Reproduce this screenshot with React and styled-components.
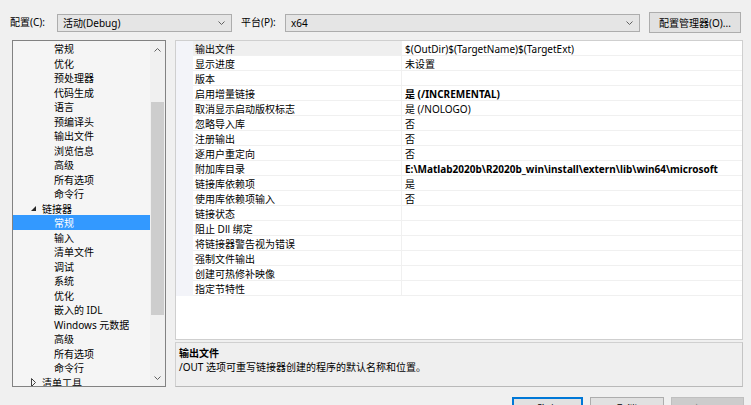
import React from "react";
import styled, { createGlobalStyle } from "styled-components";

const Global = createGlobalStyle`
  html, body { margin: 0; padding: 0; background: #f0f0f0; }
  body {
    width: 751px; height: 405px; overflow: hidden;
    font-family: "Noto Sans", "Noto Sans CJK SC", sans-serif;
    font-size: 10px; color: #000;
  }
`;

const Root = styled.div`
  display: flex;
  flex-direction: column;
  padding: 12px 7px 0 10px;
  width: 751px;
  height: 405px;
  box-sizing: border-box;
`;

const TopBar = styled.div`
  display: flex;
  align-items: center;
  height: 21px;
`;

const Label = styled.div`
  width: ${(p) => p.$w}px;
  flex: none;
  white-space: nowrap;
  line-height: 17px;
`;

const Combo = styled.div`
  width: ${(p) => p.$w}px;
  height: 18px;
  box-sizing: border-box;
  border: 1px solid #adadad;
  background: #e5e5e5;
  display: flex;
  align-items: center;
  padding: 0 6px 0 5px;
  margin-right: 9px;
  flex: none;
`;

const ComboText = styled.div`
  flex: 1;
  white-space: nowrap;
`;

const Button = styled.div`
  width: ${(p) => p.$w}px;
  height: ${(p) => p.$h || 23}px;
  box-sizing: border-box;
  flex: none;
  display: flex;
  align-items: center;
  justify-content: center;
  white-space: nowrap;
  background: ${(p) => (p.$disabled ? "#cccccc" : "#e1e1e1")};
  color: ${(p) => (p.$disabled ? "#838383" : "#000")};
  border: 1px solid ${(p) => (p.$primary ? "#0078d7" : p.$disabled ? "#bfbfbf" : "#adadad")};
  box-shadow: ${(p) => (p.$primary ? "inset 0 0 0 1px #0078d7" : "none")};
`;

const Main = styled.div`
  display: flex;
  margin-top: 7px;
  height: 347px;
`;

const Tree = styled.div`
  width: 154px;
  margin-left: 2px;
  box-sizing: border-box;
  border: 1px solid #828282;
  background: #f5f5f5;
  display: flex;
  overflow: hidden;
  flex: none;
`;

const TreeList = styled.div`
  flex: 1;
  overflow: hidden;
`;

const TreeRow = styled.div`
  height: 14.5px;
  box-sizing: border-box;
  padding-top: 2px;
  line-height: 12.5px;
  display: flex;
  align-items: center;
  padding-left: ${(p) => (p.$level === 2 ? 41 : 18)}px;
  background: ${(p) => (p.$selected ? "#3399ff" : "transparent")};
  color: ${(p) => (p.$selected ? "#fff" : "#000")};
  white-space: nowrap;
`;

const Toggle = styled.span`
  width: 11px;
  flex: none;
  display: flex;
  align-items: center;
`;

const Scroll = styled.div`
  width: 15px;
  flex: none;
  display: flex;
  flex-direction: column;
  background: #f0f0f0;
`;

const Arrow = styled.div`
  height: 17px;
  flex: none;
  display: flex;
  align-items: center;
  justify-content: center;
`;

const Track = styled.div`
  flex: 1;
  padding: 0 1px;
`;

const Thumb = styled.div`
  margin-top: ${(p) => p.$top}px;
  height: ${(p) => p.$height}px;
  background: #cdcdcd;
`;

const Right = styled.div`
  flex: 1;
  margin-left: 9px;
  margin-right: 1px;
  display: flex;
  flex-direction: column;
`;

const Grid = styled.div`
  height: 300px;
  box-sizing: border-box;
  border: 1px solid #cfcfcf;
  background: #fff;
  overflow: hidden;
`;

const PropRow = styled.div`
  display: flex;
  height: 15px;
`;

const Gutter = styled.div`
  width: 17px;
  flex: none;
  background: #f3f4f9;
`;

const NameCell = styled.div`
  width: 209px;
  flex: none;
  box-sizing: border-box;
  padding: 2px 0 0 2px;
  line-height: 12px;
  border-bottom: 1px solid #f0f0f0;
  border-right: 1px solid #f0f0f0;
  background: ${(p) => (p.$selected ? "#efefef" : "#fff")};
  white-space: nowrap;
`;

const ValueCell = styled.div`
  flex: 1;
  box-sizing: border-box;
  padding: 2px 0 0 3px;
  line-height: 12px;
  border-bottom: 1px solid #f0f0f0;
  font-weight: ${(p) => (p.$bold ? 700 : 400)};
  white-space: nowrap;
`;

const Desc = styled.div`
  margin-top: 2px;
  height: 45px;
  box-sizing: border-box;
  border: 1px solid #d0d0d0;
  border-bottom-color: #b9b9b9;
  border-right-color: #c4c4c4;
  background: #efefef;
  padding: 3px 3px 0;
`;

const DescTitle = styled.div`
  font-weight: 700;
  line-height: 14px;
`;

const DescText = styled.div`
  line-height: 14px;
`;

const Footer = styled.div`
  display: flex;
  justify-content: flex-end;
  margin-top: 10px;
  gap: 7px;
`;

const Chevron = ({ up, color = "#606060" }) => (
  <svg width="7" height="4" viewBox="0 0 7 4">
    <polyline
      points={up ? "0.5,3.5 3.5,0.5 6.5,3.5" : "0.5,0.5 3.5,3.5 6.5,0.5"}
      fill="none"
      stroke={color}
      strokeWidth="1"
    />
  </svg>
);

const Expanded = () => (
  <svg width="5" height="5" viewBox="0 0 5 5">
    <polygon points="5,0 5,5 0,5" fill="#262626" />
  </svg>
);

const Collapsed = () => (
  <svg width="5" height="9" viewBox="0 0 5 9">
    <polygon points="0.5,0.5 4.5,4.5 0.5,8.5" fill="none" stroke="#404040" strokeWidth="1" />
  </svg>
);

const treeItems = [
  ...["常规", "优化", "预处理器", "代码生成", "语言", "预编译头", "输出文件", "浏览信息", "高级", "所有选项", "命令行"].map(
    (t) => ({ t, level: 2 })
  ),
  { t: "链接器", level: 1, open: true },
  { t: "常规", level: 2, selected: true },
  ...["输入", "清单文件", "调试", "系统", "优化", "嵌入的 IDL", "Windows 元数据", "高级", "所有选项", "命令行"].map((t) => ({
    t,
    level: 2,
  })),
  { t: "清单工具", level: 1, open: false },
];

const props = [
  ["输出文件", "$(OutDir)$(TargetName)$(TargetExt)", false, true],
  ["显示进度", "未设置"],
  ["版本", ""],
  ["启用增量链接", "是 (/INCREMENTAL)", true],
  ["取消显示启动版权标志", "是 (/NOLOGO)"],
  ["忽略导入库", "否"],
  ["注册输出", "否"],
  ["逐用户重定向", "否"],
  ["附加库目录", "E:\\Matlab2020b\\R2020b_win\\install\\extern\\lib\\win64\\microsoft", true],
  ["链接库依赖项", "是"],
  ["使用库依赖项输入", "否"],
  ["链接状态", ""],
  ["阻止 Dll 绑定", ""],
  ["将链接器警告视为错误", ""],
  ["强制文件输出", ""],
  ["创建可热修补映像", ""],
  ["指定节特性", ""],
];

export default function App() {
  return (
    <>
      <Global />
      <Root>
        <TopBar>
          <Label $w={47}>配置(C):</Label>
          <Combo $w={175}>
            <ComboText>活动(Debug)</ComboText>
            <Chevron />
          </Combo>
          <Label $w={44}>平台(P):</Label>
          <Combo $w={355}>
            <ComboText>x64</ComboText>
            <Chevron />
          </Combo>
          <Button $w={92} $h={21}>配置管理器(O)...</Button>
        </TopBar>
        <Main>
          <Tree>
            <TreeList>
              {treeItems.map((it, i) => (
                <TreeRow key={i} $level={it.level} $selected={it.selected}>
                  {it.level === 1 && <Toggle>{it.open ? <Expanded /> : <Collapsed />}</Toggle>}
                  {it.t}
                </TreeRow>
              ))}
            </TreeList>
            <Scroll>
              <Arrow>
                <Chevron up />
              </Arrow>
              <Track>
                <Thumb $top={44} $height={213} />
              </Track>
              <Arrow>
                <Chevron />
              </Arrow>
            </Scroll>
          </Tree>
          <Right>
            <Grid>
              {props.map(([n, v, bold, sel], i) => (
                <PropRow key={i}>
                  <Gutter />
                  <NameCell $selected={sel}>{n}</NameCell>
                  <ValueCell $bold={bold}>{v}</ValueCell>
                </PropRow>
              ))}
            </Grid>
            <Desc>
              <DescTitle>输出文件</DescTitle>
              <DescText>/OUT 选项可重写链接器创建的程序的默认名称和位置。</DescText>
            </Desc>
          </Right>
        </Main>
        <Footer>
          <Button $w={71} $primary>确定</Button>
          <Button $w={74}>取消</Button>
          <Button $w={73} $disabled>应用(A)</Button>
        </Footer>
      </Root>
    </>
  );
}
